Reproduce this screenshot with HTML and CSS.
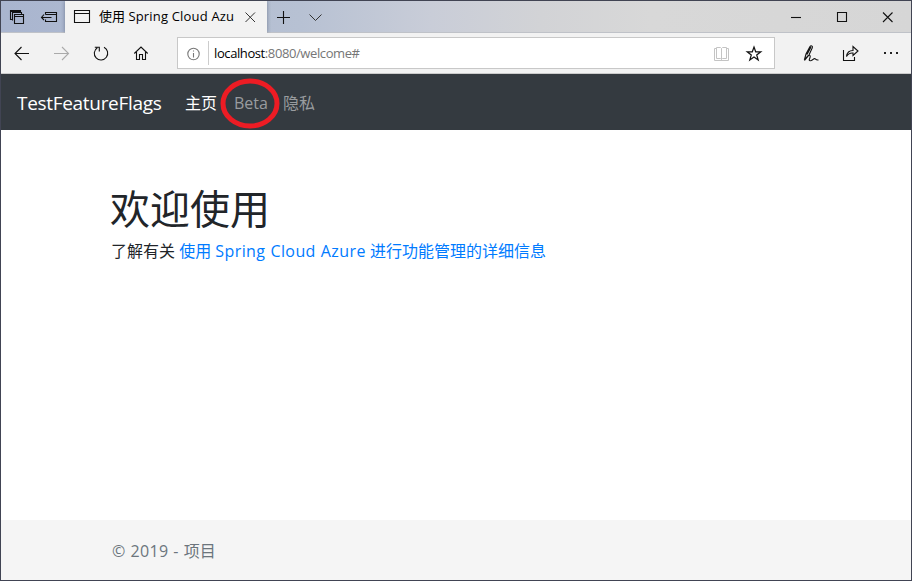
FILE: index.html
```html
<!DOCTYPE html>
<html lang="zh-CN">
<head>
<meta charset="utf-8">
<title>TestFeatureFlags</title>
<link rel="stylesheet" href="styles.css">
</head>
<body>
<div class="window">
  <header class="titlebar">
    <svg class="icon" width="32" height="32" viewBox="1 1 32 32"><path d="M12.500 19.500H10.500V10.500H20.500V12.500M12.500 20.500V12.500H21.500V14.500M10.500 11.500H20.500M14.500 14.500H23.500V23.500H14.500ZM14.500 16.500H23.500"/></svg>
    <svg class="icon" width="32" height="32" viewBox="33 1 32 32"><path d="M45.500 14.500V12.500H56.500V21.500H45.500V19.500M45.500 14.500H56.500M41.500 17.500H51.500M44 14.500L41.500 17.500L44 20"/></svg>
    <div class="tab">
      <svg class="icon" width="34" height="32" viewBox="65 1 34 32"><path d="M74.500 10.500H89.500V22.500H74.500ZM74.500 13.500H89.500"/></svg>
      <span class="tab-title">使用 <span class="tab-latin">Spring Cloud Azu</span></span>
      <svg class="icon thin" width="32" height="32" viewBox="235 1 32 32"><path d="M245.500 12.500L255 22M255 12.500L245.500 22"/></svg>
    </div>
    <svg class="icon" width="33" height="32" viewBox="267 1 33 32"><path d="M277 17.500H290M283.500 11V24"/></svg>
    <svg class="icon thin" width="32" height="32" viewBox="300 1 32 32"><path d="M309.500 14.500L315.500 20.500L321.500 14.500"/></svg>
    <div class="controls">
      <svg class="icon" width="46" height="32" viewBox="773 1 46 32"><path d="M791 17.500H801"/></svg>
      <svg class="icon" width="46" height="32" viewBox="819 1 46 32"><path d="M837.500 12.500H846.500V21.500H837.500Z"/></svg>
      <svg class="icon" width="46" height="32" viewBox="865 1 46 32"><path d="M883 12.500L892.500 22M892.500 12.500L883 22"/></svg>
    </div>
  </header>

  <div class="toolbar">
    <svg class="icon" width="40" height="40" viewBox="1 33 40 40"><path d="M29 53.500H15M21.500 47L15 53.500L21.500 60"/></svg>
    <svg class="icon muted" width="40" height="40" viewBox="41 33 40 40"><path d="M54 53.500H68M62 47L68.500 53.500L62 60"/></svg>
    <svg class="icon" width="40" height="40" viewBox="81 33 40 40"><path d="M104 47.300A6.700 6.700 0 1 1 97.300 47.700M94.800 47.200H99.300V51.500"/></svg>
    <svg class="icon" width="56" height="40" viewBox="121 33 56 40"><path d="M134.300 53.500L141 47L147.700 53.500M136.500 52V59.500H139.500V54.500H142.500V59.500H145.500V52"/></svg>
    <div class="address">
      <svg class="icon info" width="30" height="30" viewBox="178 38 30 30"><circle cx="193.500" cy="54" r="5.700"/><path d="M193.500 53V57.500M193.500 50.500V51.600"/></svg>
      <div class="url"><span class="host">localhost</span>:8080/welcome#</div>
      <svg class="icon faint" width="30" height="30" viewBox="706 38 30 30"><path d="M716.500 47.500H720.500L721.500 48.500L722.500 47.500H726.500V58.500H722.500L721.500 59.500L720.500 58.500H716.500ZM721.500 48.500V59.500M716.500 48.500H714.500V60.500H728.500V48.500H726.500"/></svg>
      <svg class="icon star" width="38" height="30" viewBox="736 38 38 30"><path d="M754 47L755.700 51.800H760.800L756.700 55L758.200 60L754 57L749.800 60L751.300 55L747.200 51.800H752.300Z"/></svg>
    </div>
    <div class="actions">
      <svg class="icon" width="40" height="40" viewBox="791 33 40 40"><path d="M804.500 59.500L806 54L810 46.500C811 45 813 46 812.300 47.800L809 55L804.500 60.500M807 54.500L811 47M804 60C806 59 808.500 53.500 810 55.500C811.500 57.500 806.500 61.500 811.500 60.500L814 58.800C816 58 815 60.500 818.500 60"/></svg>
      <svg class="icon" width="40" height="40" viewBox="831 33 40 40"><path d="M843.500 50V60.500H854.500V57M846.500 56.500C847 52.500 849 50.500 853 50.500V46.500L858 51L853 55.500V53C850 52.700 848 54 846.500 56.500Z"/></svg>
      <svg class="icon dots" width="40" height="40" viewBox="871 33 40 40"><path d="M884 52H886V54H884ZM890 52H892V54H890ZM896 52H898V54H896Z"/></svg>
    </div>
  </div>

  <nav class="navbar">
    <a class="brand">TestFeatureFlags</a>
    <a class="nav-link active">主页</a>
    <a class="nav-link beta">Beta
      <svg class="mark" width="62" height="54" viewBox="219 77 62 54"><ellipse cx="250" cy="104.500" rx="27" ry="22.500"/></svg>
    </a>
    <a class="nav-link">隐私</a>
  </nav>

  <main class="content">
    <h1>欢迎使用</h1>
    <p>了解有关 <a>使用 <span class="product">Spring Cloud Azure</span> 进行功能管理的详细信息</a></p>
  </main>

  <footer class="footer"><span class="copyright">© 2019 - </span>项目</footer>
</div>
</body>
</html>
```
FILE: styles.css
```css
* { box-sizing: border-box; }
body {
  margin: 0;
  font-family: "Open Sans", "Noto Sans CJK SC", sans-serif;
  font-size: 16px;
}
.window {
  width: 912px;
  height: 581px;
  display: flex;
  flex-direction: column;
  border: 1px solid #414453;
  overflow: hidden;
  background: #fff;
}
.icon {
  display: block;
  flex: none;
  fill: none;
  stroke: #111;
  stroke-width: 1.1;
}
.thin { stroke: #333; stroke-width: 1; }
.muted { stroke: #aaa; }
.info { stroke: #777; }
.faint { stroke: #c4c4c4; stroke-width: 1; }
.star { stroke-width: 1.2; }
.dots { fill: #222; stroke: none; }

.titlebar {
  height: 32px;
  flex: none;
  display: flex;
  background: linear-gradient(90deg, #a9b5cf 0, #b7c1d3 300px, #c9cdd8 430px, #d2d3d6 540px, #d8d8d8 650px, #d6d6d6 100%);
  box-shadow: inset 0 -1px #bfc2c8;
}
.tab {
  width: 202px;
  display: flex;
  background: #f2f2f2;
  box-shadow: 0 0 4px rgba(40, 50, 70, .45);
  clip-path: inset(0 -4px);
}
.tab-title {
  width: 136px;
  overflow: hidden;
  white-space: nowrap;
  font-size: 13px;
  line-height: 31px;
  color: #000;
}
.tab-latin { letter-spacing: .18px; }
.controls { display: flex; margin-left: auto; }

.toolbar {
  height: 41px;
  flex: none;
  display: flex;
  background: #f2f2f2;
  border-bottom: 1px solid #cbcbcb;
}
.address {
  width: 598px;
  height: 32px;
  margin-top: 4px;
  display: flex;
  border: 1px solid #c8c8c8;
  background: #fff;
}
.url {
  flex: 1;
  height: 24px;
  margin-top: 3px;
  padding-left: 5px;
  border-left: 1px solid #ccc;
  font-size: 13px;
  line-height: 25px;
  letter-spacing: -.4px;
  color: #767676;
}
.host { color: #000; }
.actions { display: flex; margin-left: auto; }

.navbar {
  height: 56px;
  flex: none;
  display: flex;
  align-items: center;
  padding: 2px 0 0 16px;
  background: #343a40;
  line-height: 24px;
  white-space: nowrap;
}
.brand {
  width: 168px;
  font-size: 19px;
  letter-spacing: -.31px;
  color: #fff;
}
.nav-link { width: 49px; color: #999c9f; }
.active { color: #fff; }
.beta { position: relative; }
.mark {
  position: absolute;
  left: -15px;
  top: -15px;
  fill: none;
  stroke: #ed1c24;
  stroke-width: 5;
}

.content { flex: 1; padding: 55px 109px 0; }
h1 {
  margin: 0;
  font-size: 40px;
  font-weight: 400;
  line-height: 48px;
  color: #212529;
}
p {
  margin: 6px 0 0 1px;
  line-height: 24px;
  white-space: nowrap;
  color: #212529;
}
p a { color: #007bff; }
.product { letter-spacing: .4px; word-spacing: .5px; }

.footer {
  height: 60px;
  flex: none;
  padding-left: 111px;
  line-height: 62px;
  color: #6c757d;
  background: #f5f5f5;
}
.copyright { letter-spacing: .3px; word-spacing: .5px; }
```
